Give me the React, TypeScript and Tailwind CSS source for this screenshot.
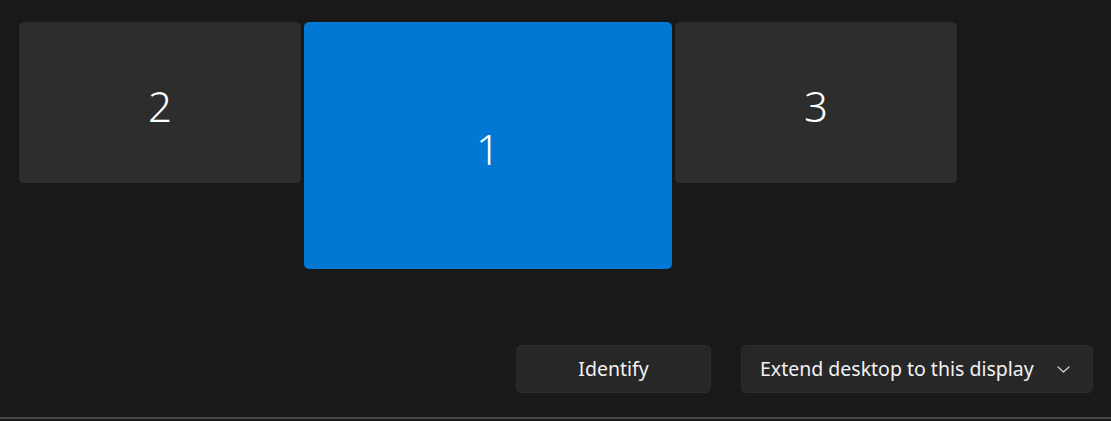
type MonitorProps = {
  label: string
  active?: boolean
}

function Monitor({ label, active }: MonitorProps) {
  return (
    <div
      className={
        active
          ? 'w-[368px] h-[247px] rounded-[5px] bg-[#0078d4] flex items-center justify-center'
          : 'w-[282px] h-[161px] rounded-[5px] bg-[#2d2d2d] flex items-center justify-center'
      }
    >
      <span className="text-white text-[42px] font-light leading-none pt-[6px]">{label}</span>
    </div>
  )
}

export default function App() {
  return (
    <div
      className="w-[1111px] h-[421px] bg-[#191919] flex flex-col overflow-hidden"
      style={{ fontFamily: '"Noto Sans", "Open Sans", sans-serif' }}
    >
      <div className="flex items-start gap-[3px] pt-[22px] pl-[19px]">
        <Monitor label="2" />
        <Monitor label="1" active />
        <Monitor label="3" />
      </div>

      <div className="flex justify-end gap-[30px] pr-[18px] mt-[76px]">
        <button className="w-[195px] h-[48px] rounded-[5px] bg-[#272727] border border-[#2b2b2b] text-[#f2f2f2] text-[19.5px] flex items-center justify-center">
          Identify
        </button>
        <button className="w-[352px] h-[48px] rounded-[5px] bg-[#272727] border border-[#2b2b2b] text-[#f2f2f2] text-[19.5px] flex items-center justify-between pl-[18px] pr-[22px]">
          <span>Extend desktop to this display</span>
          <svg width="13" height="7" viewBox="0 0 13 7" fill="none">
            <path d="M1 1 L6.5 6 L12 1" stroke="#cfcfcf" strokeWidth="1.3" strokeLinecap="round" strokeLinejoin="round" />
          </svg>
        </button>
      </div>

      <div className="mt-auto mb-[2px] h-[2px] bg-[#454545]" />
    </div>
  )
}
